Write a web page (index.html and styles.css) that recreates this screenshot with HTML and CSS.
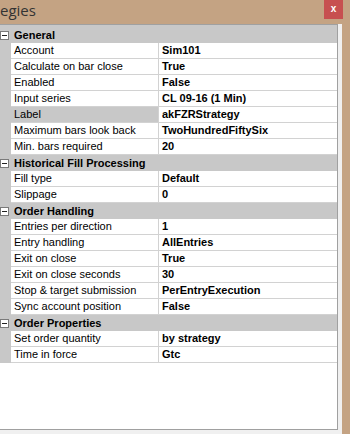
FILE: index.html
```html
<!DOCTYPE html>
<html lang="en">
<head>
    <meta charset="UTF-8">
    <title>Strategies</title>
    <link rel="stylesheet" href="styles.css">
</head>
<body>
    <div class="titlebar">
        <span class="title">egies</span>
        <div class="close">x</div>
    </div>
    <div class="client">
        <div class="grid">
            <div class="rows">
                <div class="cat"><span class="toggle"><svg width="9" height="9" viewBox="0 0 9 9"><rect x="0.5" y="0.5" width="8" height="8" fill="#fff" stroke="#7a7a7a"/><path d="M2 4.5h5" stroke="#222"/></svg></span><span class="cat-name">General</span></div>
                <div class="row"><span class="gutter"></span><span class="name">Account</span><span class="value">Sim101</span></div>
                <div class="row"><span class="gutter"></span><span class="name">Calculate on bar close</span><span class="value">True</span></div>
                <div class="row"><span class="gutter"></span><span class="name">Enabled</span><span class="value">False</span></div>
                <div class="row"><span class="gutter"></span><span class="name">Input series</span><span class="value">CL 09-16 (1 Min)</span></div>
                <div class="row selected"><span class="gutter"></span><span class="name">Label</span><span class="value">akFZRStrategy</span></div>
                <div class="row"><span class="gutter"></span><span class="name">Maximum bars look back</span><span class="value">TwoHundredFiftySix</span></div>
                <div class="row"><span class="gutter"></span><span class="name">Min. bars required</span><span class="value">20</span></div>

                <div class="cat"><span class="toggle"><svg width="9" height="9" viewBox="0 0 9 9"><rect x="0.5" y="0.5" width="8" height="8" fill="#fff" stroke="#7a7a7a"/><path d="M2 4.5h5" stroke="#222"/></svg></span><span class="cat-name">Historical Fill Processing</span></div>
                <div class="row"><span class="gutter"></span><span class="name">Fill type</span><span class="value">Default</span></div>
                <div class="row"><span class="gutter"></span><span class="name">Slippage</span><span class="value">0</span></div>

                <div class="cat"><span class="toggle"><svg width="9" height="9" viewBox="0 0 9 9"><rect x="0.5" y="0.5" width="8" height="8" fill="#fff" stroke="#7a7a7a"/><path d="M2 4.5h5" stroke="#222"/></svg></span><span class="cat-name">Order Handling</span></div>
                <div class="row"><span class="gutter"></span><span class="name">Entries per direction</span><span class="value">1</span></div>
                <div class="row"><span class="gutter"></span><span class="name">Entry handling</span><span class="value">AllEntries</span></div>
                <div class="row"><span class="gutter"></span><span class="name">Exit on close</span><span class="value">True</span></div>
                <div class="row"><span class="gutter"></span><span class="name">Exit on close seconds</span><span class="value">30</span></div>
                <div class="row"><span class="gutter"></span><span class="name">Stop &amp; target submission</span><span class="value">PerEntryExecution</span></div>
                <div class="row"><span class="gutter"></span><span class="name">Sync account position</span><span class="value">False</span></div>

                <div class="cat"><span class="toggle"><svg width="9" height="9" viewBox="0 0 9 9"><rect x="0.5" y="0.5" width="8" height="8" fill="#fff" stroke="#7a7a7a"/><path d="M2 4.5h5" stroke="#222"/></svg></span><span class="cat-name">Order Properties</span></div>
                <div class="row"><span class="gutter"></span><span class="name">Set order quantity</span><span class="value">by strategy</span></div>
                <div class="row"><span class="gutter"></span><span class="name">Time in force</span><span class="value">Gtc</span></div>
            </div>
        </div>
    </div>
</body>
</html>
```

FILE: styles.css
```css
body {
    margin: 0;
    width: 350px;
    height: 434px;
    overflow: hidden;
    background-color: #c4a383;
    font-family: "Liberation Sans", Arial, sans-serif;
    font-size: 11px;
    color: #000;
}
.titlebar {
    height: 24px;
    display: flex;
    justify-content: space-between;
    align-items: flex-start;
}
.title {
    font-family: "Open Sans", "Liberation Sans", sans-serif;
    font-size: 15px;
    line-height: 20px;
    color: #333;
}
.close {
    width: 19px;
    height: 19px;
    margin-right: 7px;
    background-color: #c75050;
    color: #fff;
    font-weight: bold;
    font-size: 10px;
    line-height: 17px;
    text-align: center;
}
.client {
    height: 410px;
    margin-right: 8px;
    background-color: #f0f0f0;
}
.grid {
    width: 337px;
    height: 404px;
    background-color: #fff;
    border-top: 1px solid #a0a0a0;
    border-right: 1px solid #a0a0a0;
    border-bottom: 1px solid #a0a0a0;
}
.rows {
    border-top: 2px solid #c8c8c8;
}
.cat {
    height: 16px;
    display: flex;
    align-items: center;
    background-color: #c8c8c8;
    font-weight: bold;
}
.toggle {
    width: 14px;
    display: flex;
}
.cat-name {
    line-height: 16px;
}
.row {
    height: 16px;
    display: grid;
    grid-template-columns: 11px 148px 1fr;
}
.gutter {
    background-color: #c8c8c8;
}
.name, .value {
    height: 15px;
    line-height: 15px;
    border-bottom: 1px solid #d2d2d2;
    white-space: nowrap;
    overflow: hidden;
}
.name {
    padding-left: 3px;
    border-right: 1px solid #d2d2d2;
}
.value {
    padding-left: 3px;
    font-weight: bold;
}
.selected .name {
    background-color: #c8c8c8;
}
```
